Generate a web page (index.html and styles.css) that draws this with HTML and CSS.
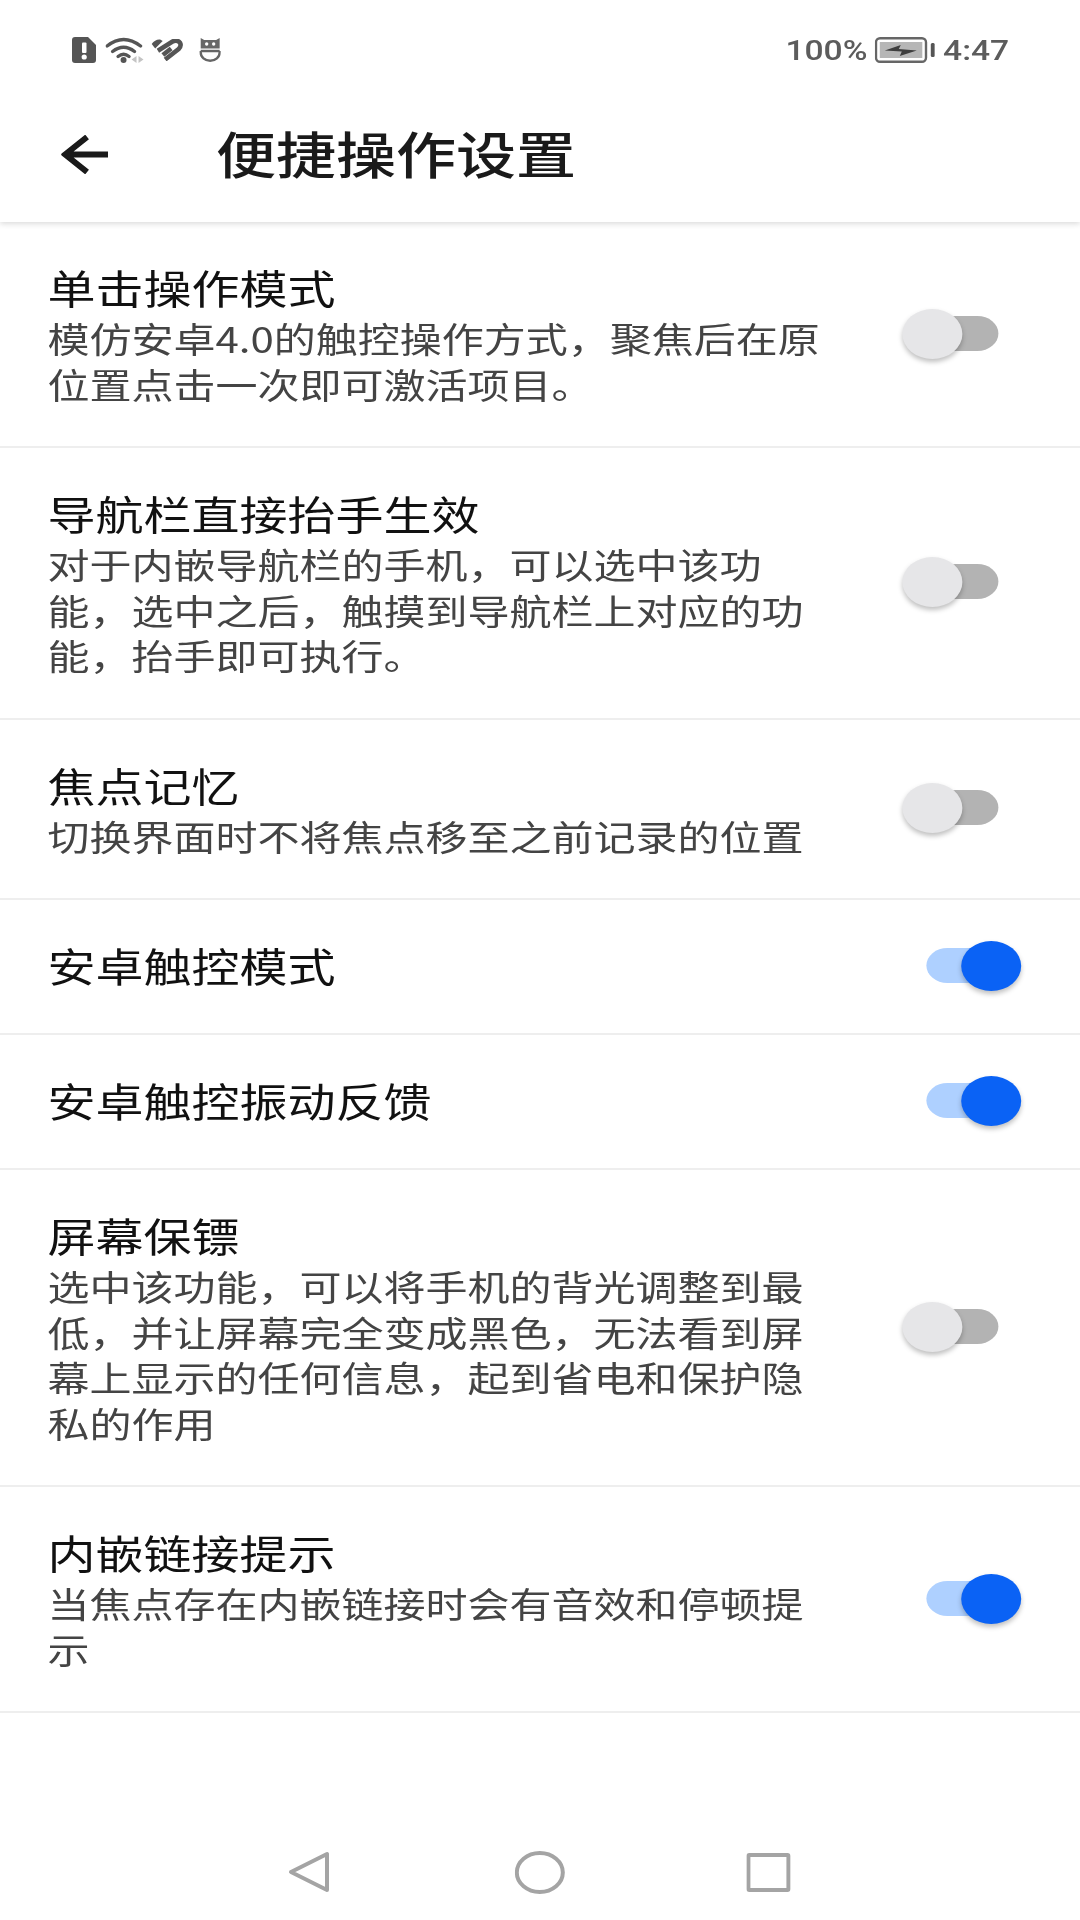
FILE: index.html
```html
<!DOCTYPE html>
<html lang="zh-CN">

<head>
    <meta charset="UTF-8">
    <meta name="viewport" content="width=device-width, initial-scale=1.0">
    <title>便捷操作设置</title>
    <link rel="stylesheet" href="styles.css">
</head>

<body>
    <div class="screen">
        <div class="statusBar">
            <svg class="statusIcon simIcon" viewBox="0 0 24 26" preserveAspectRatio="none">
                <path d="M3 0H16L24 8V23A3 3 0 0 1 21 26H3A3 3 0 0 1 0 23V3A3 3 0 0 1 3 0Z" fill="#555" />
                <rect x="10" y="5.5" width="4.5" height="10.5" rx="1" fill="#fff" />
                <circle cx="12.2" cy="20" r="2.6" fill="#fff" />
            </svg>
            <svg class="statusIcon wifiIcon" viewBox="0 0 38 26" preserveAspectRatio="none">
                <g fill="none" stroke="#555" stroke-width="3.4" stroke-linecap="round">
                    <path d="M1.5 9Q18 -4 35 9" />
                    <path d="M7 14.5Q18 6 29 14.5" />
                    <path d="M12.5 19.5Q18 15 23.5 19.5" />
                </g>
                <circle cx="18" cy="23" r="3" fill="#555" />
                <path d="M31 19V26L26 22.5ZM33 19V26L38 22.5Z" fill="#c4c4c4" />
            </svg>
            <svg class="statusIcon heartIcon" viewBox="0 0 32 22" preserveAspectRatio="none">
                <path d="M0.5 5Q4 0 9 0.5L11.5 2L4 9.5Z" fill="#555" />
                <g fill="none" stroke="#555" stroke-width="4.6">
                    <path d="M6.7 11.7L21 2.8Q26 0 29 4Q30.5 7 27.5 10L14 20.5" />
                    <path d="M11.7 16L20 9.5" />
                </g>
            </svg>
            <svg class="statusIcon robotIcon" viewBox="0 0 22 24" preserveAspectRatio="none">
                <path d="M1.5 0L5 2H17L20.5 0V10.5H1.5Z" fill="#666" />
                <circle cx="7.5" cy="6" r="1.7" fill="#fff" />
                <circle cx="14.5" cy="6" r="1.7" fill="#fff" />
                <path d="M1.5 13H20.5M1.5 13V14.5A9.5 8.3 0 0 0 20.5 14.5V13" fill="none" stroke="#666" stroke-width="2.4" />
            </svg>
            <div class="statusSpacer"></div>
            <span class="statusText">100%</span>
            <svg class="statusIcon batteryIcon" viewBox="0 0 60 26" preserveAspectRatio="none">
                <rect x="1.2" y="1.2" width="50" height="23.6" rx="4" fill="none" stroke="#666" stroke-width="2.4" />
                <rect x="5" y="5" width="42.5" height="16" fill="#b6b6b6" />
                <path d="M10 13.5L26 8L24 12L42 13.5L25 19L27 14.5Z" fill="#3e3e3e" />
                <rect x="56" y="6" width="4" height="14" rx="1.5" fill="#555" />
            </svg>
            <span class="statusText">4:47</span>
        </div>

        <div class="appBar">
            <svg class="backArrow" viewBox="0 0 47 39" preserveAspectRatio="none">
                <path d="M47 19.5H5M26 2L4 19.5L26 37" fill="none" stroke="#1a1a1a" stroke-width="6" />
            </svg>
            <h1 class="pageTitle">便捷操作设置</h1>
        </div>

        <div class="settingsList">
            <div class="settingRow">
                <div class="settingText">
                    <div class="settingTitle">单击操作模式</div>
                    <div class="settingDesc">模仿安卓4.0的触控操作方式，聚焦后在原位置点击一次即可激活项目。</div>
                </div>
                <div class="toggle"><span class="toggleKnob"></span></div>
            </div>
            <div class="settingRow">
                <div class="settingText">
                    <div class="settingTitle">导航栏直接抬手生效</div>
                    <div class="settingDesc">对于内嵌导航栏的手机，可以选中该功能，选中之后，触摸到导航栏上对应的功能，抬手即可执行。</div>
                </div>
                <div class="toggle"><span class="toggleKnob"></span></div>
            </div>
            <div class="settingRow">
                <div class="settingText">
                    <div class="settingTitle">焦点记忆</div>
                    <div class="settingDesc">切换界面时不将焦点移至之前记录的位置</div>
                </div>
                <div class="toggle"><span class="toggleKnob"></span></div>
            </div>
            <div class="settingRow">
                <div class="settingText">
                    <div class="settingTitle">安卓触控模式</div>
                </div>
                <div class="toggle toggleOn"><span class="toggleKnob"></span></div>
            </div>
            <div class="settingRow">
                <div class="settingText">
                    <div class="settingTitle">安卓触控振动反馈</div>
                </div>
                <div class="toggle toggleOn"><span class="toggleKnob"></span></div>
            </div>
            <div class="settingRow">
                <div class="settingText">
                    <div class="settingTitle">屏幕保镖</div>
                    <div class="settingDesc">选中该功能，可以将手机的背光调整到最低，并让屏幕完全变成黑色，无法看到屏幕上显示的任何信息，起到省电和保护隐私的作用</div>
                </div>
                <div class="toggle"><span class="toggleKnob"></span></div>
            </div>
            <div class="settingRow">
                <div class="settingText">
                    <div class="settingTitle">内嵌链接提示</div>
                    <div class="settingDesc">当焦点存在内嵌链接时会有音效和停顿提示</div>
                </div>
                <div class="toggle toggleOn"><span class="toggleKnob"></span></div>
            </div>
        </div>

        <div class="navBar">
            <svg class="navBack" viewBox="0 0 42 42" preserveAspectRatio="none">
                <path d="M3 21L39 3V39Z" fill="none" stroke="#a4a4a4" stroke-width="4" stroke-linejoin="round" />
            </svg>
            <svg class="navHome" viewBox="0 0 50 43" preserveAspectRatio="none">
                <ellipse cx="25" cy="21.5" rx="23" ry="19.5" fill="none" stroke="#a4a4a4" stroke-width="4" />
            </svg>
            <svg class="navRecent" viewBox="0 0 44 39" preserveAspectRatio="none">
                <rect x="2" y="2" width="40" height="35" rx="1" fill="none" stroke="#a4a4a4" stroke-width="4" />
            </svg>
        </div>
    </div>
</body>

</html>
```

FILE: styles.css
```css
html {
    background-color: white;
}

body {
    margin: 0;
    height: 1920px;
    overflow: hidden;
    background-color: white;
}

/* the capture is stretched sideways and soft, knobs and glyphs included,
   so lay out at 900 wide and scale the whole phone screen */
.screen {
    width: 900px;
    height: 1920px;
    display: flex;
    flex-direction: column;
    transform: scale(1.2, 1);
    transform-origin: 0 0;
    filter: blur(0.4px);
    font-family: "Noto Sans CJK SC", "Noto Sans", sans-serif;
}

.statusBar {
    height: 100px;
    padding: 0 59px 0 60px;
    display: flex;
    flex-direction: row;
    align-items: center;
    position: relative;
    z-index: 2;
    background-color: white;
}

.statusIcon {
    height: 26px;
    display: block;
}

.simIcon {
    width: 20px;
}

.wifiIcon {
    width: 31.6px;
    margin-left: 8.4px;
}

.heartIcon {
    width: 26.6px;
    height: 22px;
    margin-left: 6px;
}

.robotIcon {
    width: 18.3px;
    height: 24px;
    margin-left: 13px;
}

.statusSpacer {
    flex: 1;
}

.statusText {
    font-family: Roboto, sans-serif;
    font-size: 28px;
    font-weight: 500;
    color: #5c5c5c;
}

.batteryIcon {
    width: 50px;
    margin: 0 7px 0 6px;
}

.appBar {
    height: 122px;
    box-sizing: border-box;
    padding: 0 0 14px 51px;
    display: flex;
    flex-direction: row;
    align-items: center;
    position: relative;
    box-shadow: 0 2px 5px rgba(0, 0, 0, 0.14);
}

.backArrow {
    width: 39px;
    height: 39px;
    display: block;
}

.pageTitle {
    margin: 0 0 5px 90px;
    font-size: 50px;
    line-height: 60px;
    font-weight: 500;
    color: #1a1a1a;
}

.settingsList {
    flex: 1;
}

.settingRow {
    padding: 38px 48px 40px 39.5px;
    display: flex;
    flex-direction: row;
    align-items: center;
    justify-content: space-between;
    box-sizing: border-box;
    border-bottom: 2px solid #eeeeee;
}

.settingText {
    width: 650px;
}

.settingTitle {
    font-size: 40px;
    line-height: 55px;
    color: #111111;
}

.settingDesc {
    font-size: 35px;
    line-height: 45.5px;
    color: #444444;
}

.toggle {
    width: 60px;
    height: 35px;
    margin-right: 20px;
    border-radius: 18px;
    position: relative;
    background-color: #b3b3b3;
}

.toggleKnob {
    width: 50px;
    height: 50px;
    border-radius: 50%;
    position: absolute;
    top: -7px;
    left: -20px;
    background-color: #e6e6e8;
    box-shadow: 0 3px 5px rgba(0, 0, 0, 0.25);
}

.toggleOn {
    background-color: #aed0ff;
}

.toggleOn .toggleKnob {
    left: 29px;
    background-color: #0a62f5;
}

.navBar {
    height: 96px;
    padding-left: 240px;
    display: flex;
    flex-direction: row;
    align-items: center;
}

.navBack {
    width: 35px;
    height: 42px;
}

.navHome {
    width: 41.7px;
    height: 43px;
    margin-left: 154px;
}

.navRecent {
    width: 36.7px;
    height: 39px;
    margin-left: 151.7px;
}
```
